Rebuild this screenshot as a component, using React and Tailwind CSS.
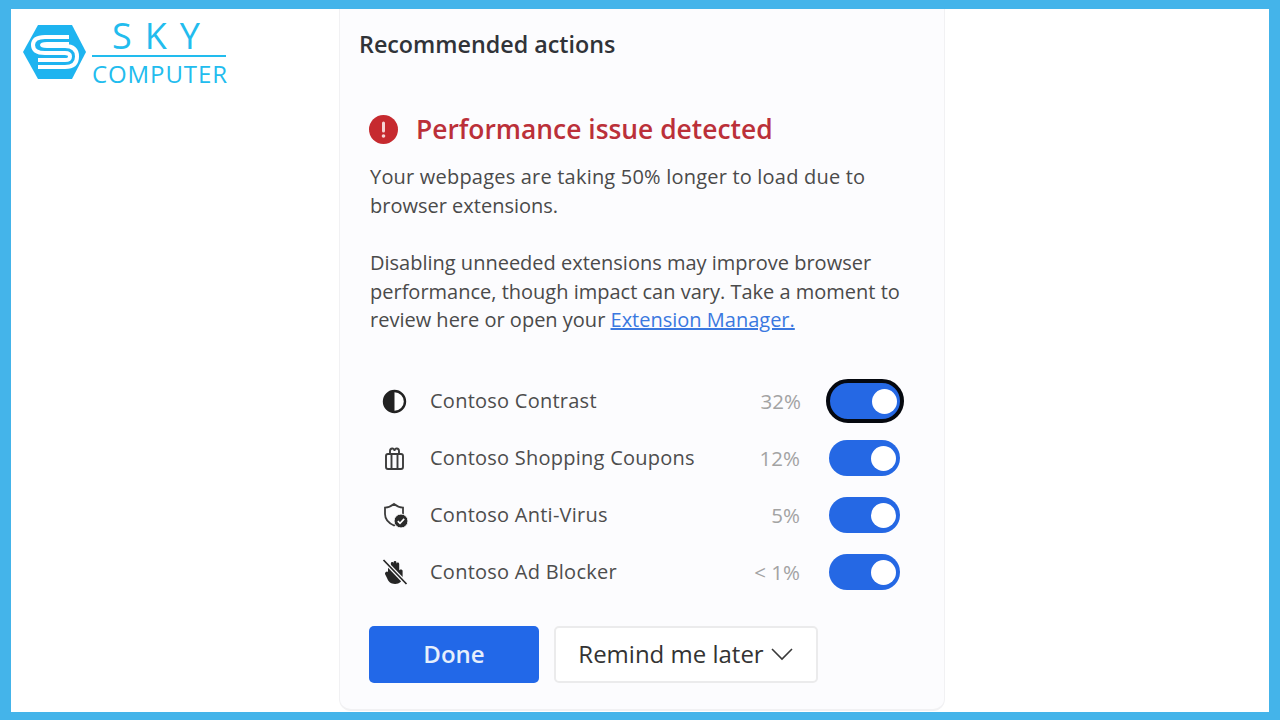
import React from "react";

function Logo() {
  return (
    <div className="flex items-start w-[217px]">
      <svg width="64" height="56" viewBox="0 0 64 56" className="shrink-0 mt-[16px]">
        <path d="M15 0H49L63 27L49 54H15L0 27Z" fill="#1eb4f0" />
        <path d="M46 12H22Q10 12 10 20Q10 28 22 28H42Q47 28 47 31.5Q47 35 42 35H15" fill="none" stroke="#fff" strokeWidth="4" />
        <path d="M15 42H42Q54 42 54 31.5Q54 21 42 21H24Q19 21 19 20Q19 19 24 19H46" fill="none" stroke="#fff" strokeWidth="4" />
      </svg>
      <div className="ml-[5px] mt-[9px] w-[135px] flex flex-col items-start font-['Open_Sans',sans-serif] text-[#22bcee]">
        <div className="h-[36px] leading-[36px] pl-[20px] text-[36px] tracking-[13px] font-medium">SKY</div>
        <div className="w-[134px] h-[2px] bg-[#22bcee] mt-[1px]"></div>
        <div className="mt-[3px] text-[24px] leading-[28px] tracking-[0.9px] whitespace-nowrap">COMPUTER</div>
      </div>
    </div>
  );
}

function Row({ icon, name, pct, focus }) {
  return (
    <div className="flex items-center h-[57px]">
      <div className="w-[61px] pl-[13px] flex items-center">{icon}</div>
      <div className="flex-1 text-[20px] text-[#4d4d4d] tracking-[0.25px]">{name}</div>
      <div className="text-[20.5px] text-[#a3a3a3] mr-[29px]">{pct}</div>
      <div className={focus
        ? "w-[78px] h-[44px] -mx-[4px] rounded-full border-[4px] border-[#05080f] bg-[#2568e4] flex items-center justify-end pr-[3px] mr-[-4px]"
        : "w-[71px] h-[36px] rounded-full bg-[#2568e4] flex items-center justify-end pr-[4px]"}>
        <div className="w-[25px] h-[25px] rounded-full bg-white"></div>
      </div>
    </div>
  );
}

const contrast = (
  <svg width="25" height="25" viewBox="0 0 25 25">
    <circle cx="12.5" cy="12.5" r="10.5" fill="#fff" stroke="#222" strokeWidth="2.4" />
    <path d="M12.5 2a10.5 10.5 0 0 0 0 21Z" fill="#222" />
  </svg>
);
const gift = (
  <svg width="25" height="25" viewBox="0 0 25 25" fill="none" stroke="#3c3c3c" strokeWidth="1.9">
    <rect x="4" y="8" width="17" height="15" rx="2" />
    <path d="M9.5 8V23M15.5 8V23" />
    <path d="M8 8V5C8 2 12.5 1.5 12.5 5C12.5 1.5 17 2 17 5V8" />
  </svg>
);
const shield = (
  <svg width="26" height="26" viewBox="0 0 26 26">
    <path d="M12 2C9 4.5 6.5 5.5 3 5.6V12C3 17.5 6.5 21 12 23.5C17.5 21 21 17.5 21 12V5.6C17.5 5.5 15 4.5 12 2Z" fill="none" stroke="#3c3c3c" strokeWidth="1.8" />
    <circle cx="19" cy="19" r="7" fill="#2a2a2a" stroke="#fcfcfd" strokeWidth="1" />
    <path d="M15.8 19.2L18 21.3L22.2 16.9" fill="none" stroke="#fff" strokeWidth="1.6" />
  </svg>
);
const hand = (
  <svg width="26" height="26" viewBox="0 0 26 26">
    <path d="M6 13V7.5a1.4 1.4 0 0 1 2.8 0V4.5a1.4 1.4 0 0 1 2.8 0V3.5a1.4 1.4 0 0 1 2.8 0V5a1.4 1.4 0 0 1 2.8 0V11.5c.5-1.5 3.4-1.5 3.4.5V17c0 5-3 8-7.5 8S6 22 5 19L3 15c-.4-1.7 2.2-3.6 3-2Z" fill="#262626" />
    <path d="M1.5 1L24 24.5" stroke="#fcfcfd" strokeWidth="4" />
    <path d="M1.5 1L24.5 25" stroke="#262626" strokeWidth="1.7" />
  </svg>
);

export default function App() {
  return (
    <div className="w-[1280px] h-[720px] bg-white border-[#44b4ea] border-t-[9px] border-b-[8px] border-l-[11px] border-r-[11px] flex overflow-hidden font-['Open_Sans',sans-serif]">
      <div className="w-[328px] shrink-0 pl-[12px]">
        <Logo />
      </div>
      <div className="w-[606px] h-[702px] bg-[#fcfcfe] rounded-b-[12px] border-b-[2px] border-x border-[#f1f1f3] pl-[19px] pr-[44px] flex flex-col">
        <h2 className="mt-[18px] text-[23.3px] leading-[34px] font-semibold text-[#303338] whitespace-nowrap">Recommended actions</h2>
        <div className="mt-[49px] flex items-center h-[38px] pl-[10px]">
          <svg width="29" height="29" viewBox="0 0 29 29" className="shrink-0">
            <circle cx="14.5" cy="14.5" r="14.5" fill="#c62a2f" />
            <rect x="13" y="6.5" width="3" height="11" rx="1.5" fill="#f5d5d5" />
            <circle cx="14.5" cy="21" r="1.8" fill="#f5d5d5" />
          </svg>
          <h1 className="ml-[18px] text-[26.4px] leading-[38px] font-semibold text-[#bb3039] whitespace-nowrap">Performance issue detected</h1>
        </div>
        <p className="mt-[15px] pl-[11px] text-[20px] leading-[28.5px] text-[#4a4a4a] whitespace-nowrap"><span className="tracking-[0.2px]">Your webpages are taking 50% longer to load due to</span><br />browser extensions.</p>
        <p className="mt-[29px] pl-[11px] text-[20px] leading-[28.5px] text-[#4a4a4a] whitespace-nowrap">
          Disabling unneeded extensions may improve browser<br />
          performance, though impact can vary. Take a moment to<br />
          review here or open your <a href="#" className="text-[#3a78e0] underline">Extension Manager.</a>
        </p>
        <div className="mt-[38px] flex flex-col pl-[10px]">
          <Row icon={contrast} name="Contoso Contrast" pct="32%" focus />
          <Row icon={gift} name="Contoso Shopping Coupons" pct="12%" />
          <Row icon={shield} name="Contoso Anti-Virus" pct="5%" />
          <Row icon={hand} name="Contoso Ad Blocker" pct="< 1%" />
        </div>
        <div className="mt-[25px] pl-[10px] flex gap-[15px]">
          <button className="w-[170px] h-[57px] rounded-[5px] bg-[#2268e8] text-[#e6effc] text-[24px] font-semibold">Done</button>
          <button className="w-[264px] h-[57px] rounded-[5px] bg-white border-[2px] border-[#ebebec] text-[#333] text-[24px] font-medium flex items-center justify-center gap-[6px]">
            Remind me later
            <svg width="24" height="14" viewBox="0 0 24 14" fill="none" stroke="#3a3a3a" strokeWidth="1.6"><path d="M2 2L12 12L22 2" /></svg>
          </button>
        </div>
      </div>
    </div>
  );
}
